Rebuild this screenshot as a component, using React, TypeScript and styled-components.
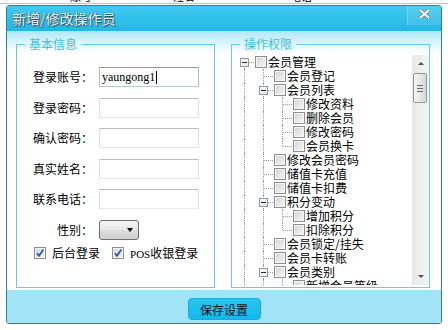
import React from 'react';
import styled, { createGlobalStyle } from 'styled-components';

const GlobalStyle = createGlobalStyle`
  html, body {
    margin: 0;
    padding: 0;
    background: #fff;
  }
  body {
    font-family: "Noto Sans CJK SC", sans-serif;
    font-size: 12px;
    color: #000;
  }
`;

const Page = styled.div`
  width: 448px;
  height: 330px;
  overflow: hidden;
  background: #fff;
`;

// the list window that lies behind the dialog; only the foot of its header shows
const BackdropHeader = styled.div`
  display: flex;
  height: 3px;
  overflow: hidden;
  border-bottom: 1px solid #c4c4c4;
`;

const BackdropCell = styled.span<{ $left: number }>`
  margin-left: ${(p) => p.$left}px;
  margin-top: -9px;
  font-size: 11px;
  line-height: 11px;
  white-space: nowrap;
`;

const Dialog = styled.div`
  margin: 1px 0 0 6px;
  width: 436px;
  height: 319px;
  box-sizing: border-box;
  border: 1px solid #2f7f96;
  border-radius: 3px;
  display: flex;
  flex-direction: column;
  overflow: hidden;
  background: #fff;
`;

const TitleBar = styled.div`
  height: 25px;
  flex: none;
  display: flex;
  align-items: flex-start;
  padding-left: 5px;
  background: linear-gradient(#41c9f1, #22b6e6);
`;

const Title = styled.span`
  font-size: 14px;
  line-height: 25px;
  color: #f6f6f6;
  text-shadow: 0 0 1px #1f3a44, 1px 1px 1px #2c4a55;
`;

const CloseButton = styled.div`
  margin-left: auto;
  width: 34px;
  height: 19px;
  box-sizing: border-box;
  border-left: 1px solid rgba(255, 255, 255, 0.3);
  background: rgba(255, 255, 255, 0.1);
  display: flex;
  justify-content: center;
  padding-top: 3px;
`;

const Body = styled.div`
  height: 259px;
  box-sizing: border-box;
  flex: none;
  display: flex;
  gap: 16px;
  padding: 6px 11px 2px 9px;
  background: linear-gradient(#afe8f7, #ffffff 22px);
`;

const Group = styled.fieldset`
  width: 199px;
  margin: 0;
  padding: 0;
  min-width: 0;
  box-sizing: border-box;
  border: 1px solid #63cde6;
`;

const GroupTitle = styled.legend`
  margin-left: 8px;
  padding: 0 4px;
  font-size: 12px;
  line-height: 14px;
  color: #3ec2e2;
`;

const FormGrid = styled.div`
  display: grid;
  grid-template-columns: 60px 100px;
  column-gap: 6px;
  row-gap: 10.6px;
  align-items: center;
  padding: 16px 0 0 16px;
`;

const FieldLabel = styled.span`
  text-align: right;
  line-height: 20px;
  white-space: nowrap;
`;

const TextBox = styled.div<{ $focused?: boolean }>`
  width: 100px;
  height: 20px;
  box-sizing: border-box;
  border: 1px solid;
  border-color: ${(p) => (p.$focused ? '#7f9db6 #a9c2d6 #b4cbdc #a9c2d6' : '#b9bec6 #dde1e6 #e3e7ec #dde1e6')};
  background: #fff;
  display: flex;
  align-items: center;
  padding-left: 2px;
  font-family: "Liberation Serif", serif;
  font-size: 12px;
`;

const Caret = styled.span`
  width: 1px;
  height: 13px;
  margin-left: 1px;
  background: #000;
`;

const Dropdown = styled.div`
  width: 40px;
  height: 20px;
  box-sizing: border-box;
  border: 1px solid #6f6f6f;
  border-radius: 3px;
  background: linear-gradient(#f4f4f4, #e8e8e8 50%, #dddddd 50%, #d0d0d0);
  display: flex;
  align-items: center;
  justify-content: flex-end;
  padding-right: 5px;

  &::after {
    content: '';
    border-left: 3.5px solid transparent;
    border-right: 3.5px solid transparent;
    border-top: 4px solid #000;
  }
`;

const CheckRow = styled.div`
  display: flex;
  align-items: center;
  gap: 12px;
  margin: 6px 0 0 17px;
`;

const CheckItem = styled.label`
  display: flex;
  align-items: center;
  gap: 6px;
  line-height: 14px;
  white-space: nowrap;
`;

const Latin = styled.span`
  font-family: "Liberation Serif", serif;
  font-size: 11px;
`;

const Box = styled.span`
  flex: none;
  width: 12px;
  height: 12px;
  box-sizing: border-box;
  border: 1px solid #8e8e8e;
  background: linear-gradient(135deg, #d2d2d2, #f7f7f7);
  box-shadow: inset 0 0 0 1px #f6f6f6;
  display: flex;
`;

const TreeArea = styled.div`
  height: 236px;
  box-sizing: border-box;
  padding: 4px 0 2px 3px;
  display: flex;
`;

const TreeList = styled.div`
  flex: 1;
  min-width: 0;
  overflow: hidden;
`;

const TreeRow = styled.div`
  display: flex;
  align-items: center;
  height: 14px;
  white-space: nowrap;
`;

const Guide = styled.span<{ $line: boolean }>`
  position: relative;
  flex: none;
  width: 19px;
  height: 14px;

  &::before {
    content: '';
    display: ${(p) => (p.$line ? 'block' : 'none')};
    position: absolute;
    left: 9px;
    top: 0;
    bottom: 0;
    border-left: 1px dotted #9c9c9c;
  }
`;

const Connector = styled.span<{ $top: boolean; $last: boolean }>`
  position: relative;
  flex: none;
  width: 19px;
  height: 14px;

  &::before {
    content: '';
    position: absolute;
    left: 9px;
    top: ${(p) => (p.$top ? 0 : 7)}px;
    bottom: ${(p) => (p.$last ? 7 : 0)}px;
    border-left: 1px dotted #9c9c9c;
  }
  &::after {
    content: '';
    position: absolute;
    left: 10px;
    right: 0;
    top: 7px;
    border-top: 1px dotted #9c9c9c;
  }
`;

const Toggle = styled.span`
  position: absolute;
  z-index: 1;
  left: 5px;
  top: 3px;
  width: 9px;
  height: 9px;
  box-sizing: border-box;
  border: 1px solid #8f9aa6;
  background: linear-gradient(135deg, #ffffff, #e3e6ea);

  &::after {
    content: '';
    position: absolute;
    left: 1px;
    right: 1px;
    top: 3px;
    height: 1px;
    background: #2a2a2a;
  }
`;

const TreeBox = styled(Box)`
  margin-left: 1px;
`;

const TreeText = styled.span`
  margin-left: 1px;
  font-size: 12px;
  line-height: 14px;
`;

const ScrollBar = styled.div`
  flex: none;
  width: 17px;
  display: flex;
  flex-direction: column;
  background: linear-gradient(90deg, #e8e8e8, #f3f3f3);
`;

const ScrollArrow = styled.div<{ $down?: boolean }>`
  height: 17px;
  flex: none;
  display: flex;
  align-items: center;
  justify-content: center;
  margin-top: ${(p) => (p.$down ? 'auto' : 0)};

  &::after {
    content: '';
    border-left: 3px solid transparent;
    border-right: 3px solid transparent;
    ${(p) => (p.$down ? 'border-top' : 'border-bottom')}: 3px solid #505050;
  }
`;

const Thumb = styled.div`
  margin: 1px 0 0 1px;
  width: 14px;
  height: 30px;
  box-sizing: border-box;
  border: 1px solid #989898;
  border-radius: 2px;
  background: linear-gradient(90deg, #f6f6f6, #e4e4e4 60%, #d6d6d6);
  display: flex;
  flex-direction: column;
  align-items: center;
  justify-content: center;
  gap: 2px;
`;

const Grip = styled.span`
  width: 6px;
  height: 1px;
  background: #6e6e6e;
`;

const Footer = styled.div`
  flex: 1;
  display: flex;
  justify-content: center;
  align-items: flex-start;
  padding-top: 8px;
  background: #a2e4f6;
`;

const SaveButton = styled.button`
  width: 73px;
  height: 22px;
  box-sizing: border-box;
  border: 1px solid #1aa8d8;
  border-radius: 4px;
  background: linear-gradient(#2ac4f1, #14b7ea);
  font-family: "Noto Sans CJK SC", sans-serif;
  font-size: 12px;
  color: #111;
  padding: 0;
`;

type Node = { label: string; children?: Node[] };

const permissions: Node[] = [
  {
    label: '会员管理',
    children: [
      { label: '会员登记' },
      {
        label: '会员列表',
        children: [{ label: '修改资料' }, { label: '删除会员' }, { label: '修改密码' }, { label: '会员换卡' }],
      },
      { label: '修改会员密码' },
      { label: '储值卡充值' },
      { label: '储值卡扣费' },
      { label: '积分变动', children: [{ label: '增加积分' }, { label: '扣除积分' }] },
      { label: '会员锁定/挂失' },
      { label: '会员卡转账' },
      {
        label: '会员类别',
        children: [{ label: '新增会员等级' }, { label: '修改会员等级' }, { label: '删除会员等级' }],
      },
      { label: '会员短信' },
    ],
  },
  { label: '商品管理', children: [{ label: '商品资料' }, { label: '商品类别' }] },
  { label: '库存管理' },
];

type Row = { label: string; guides: boolean[]; top: boolean; last: boolean; toggle: boolean };

const flatten = (nodes: Node[], guides: boolean[] = [], out: Row[] = []): Row[] => {
  nodes.forEach((node, i) => {
    const last = i === nodes.length - 1;
    out.push({ label: node.label, guides, top: guides.length > 0 || i > 0, last, toggle: !!node.children });
    if (node.children) flatten(node.children, [...guides, !last], out);
  });
  return out;
};

const rows = flatten(permissions);

const fields = ['登录账号：', '登录密码：', '确认密码：', '真实姓名：', '联系电话：'];

const CheckMark = () => (
  <svg width="10" height="10" viewBox="0 0 10 10">
    <path d="M1.8 5.2 L4 7.8 L8.4 1.6" fill="none" stroke="#2752b5" strokeWidth="1.7" />
  </svg>
);

const CloseGlyph = () => (
  <svg width="11" height="10" viewBox="0 0 11 10">
    <path d="M1.5 1.5 L9.5 8.5 M9.5 1.5 L1.5 8.5" stroke="#5f7f8c" strokeWidth="3.6" strokeLinecap="square" />
    <path d="M1.5 1.5 L9.5 8.5 M9.5 1.5 L1.5 8.5" stroke="#ffffff" strokeWidth="2" strokeLinecap="square" />
  </svg>
);

const App = () => {
  return (
    <Page>
      <GlobalStyle />
      <BackdropHeader>
        <BackdropCell $left={70}>账号</BackdropCell>
        <BackdropCell $left={81}>姓名</BackdropCell>
        <BackdropCell $left={95}>电话</BackdropCell>
      </BackdropHeader>
      <Dialog>
        <TitleBar>
          <Title>新增/修改操作员</Title>
          <CloseButton>
            <CloseGlyph />
          </CloseButton>
        </TitleBar>
        <Body>
          <Group>
            <GroupTitle>基本信息</GroupTitle>
            <FormGrid>
              {fields.map((label, i) => (
                <React.Fragment key={label}>
                  <FieldLabel>{label}</FieldLabel>
                  <TextBox $focused={i === 0}>
                    {i === 0 && (
                      <>
                        yaungong1
                        <Caret />
                      </>
                    )}
                  </TextBox>
                </React.Fragment>
              ))}
              <FieldLabel>性别：</FieldLabel>
              <Dropdown />
            </FormGrid>
            <CheckRow>
              <CheckItem>
                <Box>
                  <CheckMark />
                </Box>
                后台登录
              </CheckItem>
              <CheckItem>
                <Box>
                  <CheckMark />
                </Box>
                <span>
                  <Latin>POS</Latin>收银登录
                </span>
              </CheckItem>
            </CheckRow>
          </Group>
          <Group>
            <GroupTitle>操作权限</GroupTitle>
            <TreeArea>
              <TreeList>
                {rows.map((row, i) => (
                  <TreeRow key={i}>
                    {row.guides.map((line, j) => (
                      <Guide key={j} $line={line} />
                    ))}
                    <Connector $top={row.top} $last={row.last}>
                      {row.toggle && <Toggle />}
                    </Connector>
                    <TreeBox />
                    <TreeText>{row.label}</TreeText>
                  </TreeRow>
                ))}
              </TreeList>
              <ScrollBar>
                <ScrollArrow />
                <Thumb>
                  <Grip />
                  <Grip />
                  <Grip />
                </Thumb>
                <ScrollArrow $down />
              </ScrollBar>
            </TreeArea>
          </Group>
        </Body>
        <Footer>
          <SaveButton>保存设置</SaveButton>
        </Footer>
      </Dialog>
    </Page>
  );
};

export default App;
